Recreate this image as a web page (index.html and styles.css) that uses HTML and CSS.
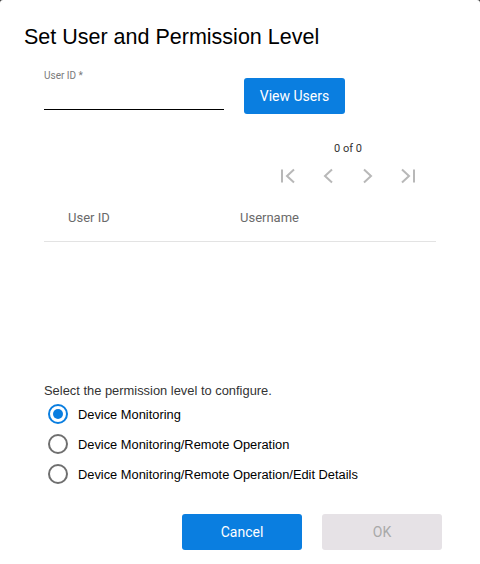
FILE: index.html
```html
<!DOCTYPE html>
<html lang="en">
<head>
<meta charset="utf-8">
<title>Set User and Permission Level</title>
<link rel="stylesheet" href="styles.css">
</head>
<body>
<div class="dialog">
  <h1 class="title">Set User and Permission Level</h1>

  <div class="user-row">
    <div class="field">
      <label class="field-label" for="uid">User ID *</label>
      <input class="field-input" id="uid" type="text">
    </div>
    <button class="btn btn-primary btn-view">View Users</button>
  </div>

  <div class="table-area">
    <div class="pager">
      <div class="pager-count">0 of 0</div>
      <div class="pager-buttons">
        <span class="pager-btn">
          <svg width="16" height="16" viewBox="0 0 16 16"><path d="M2 1.5v13M14 1.5L7 8l7 6.5" fill="none" stroke="#b8b8b8" stroke-width="2"/></svg>
        </span>
        <span class="pager-btn">
          <svg width="16" height="16" viewBox="0 0 16 16"><path d="M12 1.5L5 8l7 6.5" fill="none" stroke="#b8b8b8" stroke-width="2"/></svg>
        </span>
        <span class="pager-btn">
          <svg width="16" height="16" viewBox="0 0 16 16"><path d="M4 1.5L11 8l-7 6.5" fill="none" stroke="#b8b8b8" stroke-width="2"/></svg>
        </span>
        <span class="pager-btn">
          <svg width="16" height="16" viewBox="0 0 16 16"><path d="M2 1.5L9 8l-7 6.5M14 1.5v13" fill="none" stroke="#b8b8b8" stroke-width="2"/></svg>
        </span>
      </div>
    </div>

    <div class="table">
      <div class="table-head">
        <div class="th">User ID</div>
        <div class="th">Username</div>
      </div>
      <div class="table-body"></div>
    </div>
  </div>

  <div class="perm">
    <p class="perm-label">Select the permission level to configure.</p>
    <label class="radio-row"><span class="radio checked"></span>Device Monitoring</label>
    <label class="radio-row"><span class="radio"></span>Device Monitoring/Remote Operation</label>
    <label class="radio-row"><span class="radio"></span>Device Monitoring/Remote Operation/Edit Details</label>
  </div>

  <div class="actions">
    <button class="btn btn-primary btn-action">Cancel</button>
    <button class="btn btn-disabled btn-action">OK</button>
  </div>
</div>
</body>
</html>
```

FILE: styles.css
```css
html {
  background: #3a3a3a;
}
body {
  margin: 0;
  font-family: "Liberation Sans", Arial, sans-serif;
}
.dialog {
  background: #fff;
  min-height: 564px;
  border-radius: 3px 3px 0 0;
  padding: 0 24px;
  box-sizing: border-box;
}
.title {
  margin: 0;
  padding-top: 24px;
  font-size: 21.5px;
  line-height: 26px;
  font-weight: normal;
  color: #000;
}
.user-row {
  display: flex;
  align-items: flex-start;
  gap: 20px;
  margin-top: 20px;
  padding-left: 20px;
}
.field {
  display: flex;
  flex-direction: column;
  width: 180px;
}
.field-label {
  font-family: Roboto, sans-serif;
  font-size: 10px;
  line-height: 12px;
  color: #7a7a7a;
}
.field-input {
  height: 27px;
  border: none;
  border-bottom: 1px solid #000;
  padding: 0;
  margin: 0;
  outline: none;
  font-family: Roboto, sans-serif;
  font-size: 13px;
  box-sizing: content-box;
  background: transparent;
}
.btn {
  border: none;
  border-radius: 3px;
  font-family: Roboto, sans-serif;
  font-size: 14px;
  padding: 0;
  cursor: pointer;
}
.btn-primary {
  background: #0a7ee0;
  color: #fff;
}
.btn-disabled {
  background: #e6e2e6;
  color: #a9a9a9;
}
.btn-view {
  width: 101px;
  height: 36px;
  margin-top: 8px;
}
.table-area {
  padding-left: 20px;
  width: 392px;
}
.pager {
  display: flex;
  flex-direction: column;
  align-items: center;
  width: 160px;
  margin-left: auto;
  margin-right: 8px;
  margin-top: 28px;
}
.pager-count {
  font-family: Roboto, sans-serif;
  font-size: 11px;
  line-height: 14px;
  color: #333;
}
.pager-buttons {
  display: flex;
  margin-top: 8px;
}
.pager-btn {
  width: 40px;
  height: 24px;
  display: flex;
  align-items: center;
  justify-content: center;
}
.table-head {
  display: grid;
  grid-template-columns: 172px 1fr;
  border-bottom: 1px solid #e3e3e3;
}
.th {
  padding: 22px 0 15px 24px;
  font-family: Roboto, sans-serif;
  font-size: 13px;
  line-height: 16px;
  color: #6a6a6a;
}
.table-body {
  height: 141px;
}
.perm {
  padding-left: 20px;
}
.perm-label {
  margin: 0 0 1px;
  font-size: 12.9px;
  line-height: 15px;
  color: #333;
}
.radio-row {
  display: flex;
  align-items: center;
  gap: 10px;
  height: 30px;
  font-size: 12.85px;
  color: #000;
  padding-left: 4px;
}
.radio {
  width: 20px;
  height: 20px;
  box-sizing: border-box;
  border: 2px solid #6f6f6f;
  border-radius: 50%;
  display: flex;
  align-items: center;
  justify-content: center;
}
.radio.checked {
  border-color: #0a7ee0;
}
.radio.checked::after {
  content: "";
  width: 10px;
  height: 10px;
  border-radius: 50%;
  background: #0a7ee0;
}
.actions {
  display: flex;
  justify-content: flex-end;
  gap: 20px;
  margin-top: 25px;
  padding-right: 14px;
}
.btn-action {
  width: 120px;
  height: 36px;
}
```
